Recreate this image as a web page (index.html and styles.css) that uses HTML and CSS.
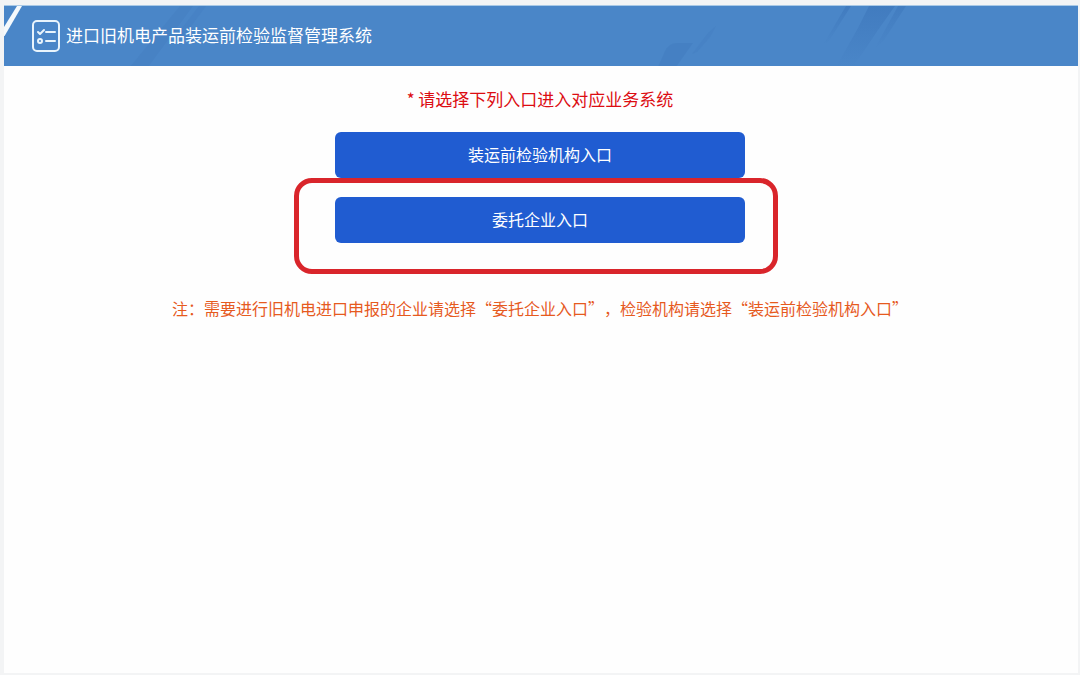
FILE: index.html
```html
<!DOCTYPE html>
<html lang="zh-CN">
<head>
<meta charset="utf-8">
<title>进口旧机电产品装运前检验监督管理系统</title>
<link rel="stylesheet" href="styles.css">
</head>
<body>
<div class="page">
  <header class="header">
    <svg class="corner" viewBox="0 0 18 30" aria-hidden="true">
      <path d="M0 21 13 0h5L0 31z" fill="#f5f9fc"/>
    </svg>
    <svg class="streaks streaks-left" viewBox="0 0 90 61" aria-hidden="true">
      <path d="M50 0h13L18 61H0z" fill="#437dc0" opacity=".5"/>
      <path d="M69 0h7L54 30h-8z" fill="#437dc0" opacity=".4"/>
    </svg>
    <svg class="streaks streaks-right" viewBox="0 0 260 61" aria-hidden="true">
      <defs>
        <linearGradient id="fade" x1="0" y1="0" x2="0" y2="1">
          <stop offset="0" stop-color="#3f79bd"/>
          <stop offset="1" stop-color="#3f79bd" stop-opacity="0"/>
        </linearGradient>
      </defs>
      <path d="M0 61 7 45q4-8 12-8h16L18 61z" fill="#437dc0" opacity=".6"/>
      <path d="M34 48 50 27 58 20 52 31 39 46z" fill="#437dc0" opacity=".4"/>
      <path d="M165 39 188 0h5L171 35z" fill="url(#fade)" opacity=".8"/>
      <path d="M178 61 200 22 211 0h26L220 24 208 42 195 61z" fill="url(#fade)" opacity=".8"/>
      <path d="M216 44 240 0h8L226 34z" fill="url(#fade)" opacity=".7"/>
    </svg>
    <svg class="logo" viewBox="0 0 28 32" fill="none" stroke="#e9f4fc" stroke-linecap="round" stroke-linejoin="round" aria-hidden="true">
      <rect x="1" y="1" width="26" height="30" rx="4" stroke-width="2"/>
      <path d="m6 12 2 2 4-4M14 12h9M14 21h9" stroke-width="2"/>
      <circle cx="8" cy="21" r="2" stroke-width="2"/>
    </svg>
    <h1 class="title">进口旧机电产品装运前检验监督管理系统</h1>
  </header>
  <main class="content">
    <p class="prompt">* 请选择下列入口进入对应业务系统</p>
    <div class="entries">
      <button class="entry" type="button">装运前检验机构入口</button>
      <button class="entry" type="button">委托企业入口</button>
      <div class="highlight"></div>
    </div>
    <p class="note">注：需要进行旧机电进口申报的企业请选择“委托企业入口”，检验机构请选择“装运前检验机构入口”</p>
  </main>
</div>
</body>
</html>
```
FILE: styles.css
```css
* {
  box-sizing: border-box;
}

body {
  margin: 0;
  background: #f3f4f5;
  font-family: "Noto Sans CJK SC", sans-serif;
  text-spacing-trim: space-all;
}

.page {
  display: flex;
  flex-direction: column;
  min-height: 100vh;
  padding: 5px 2px 1px 4px;
}

.header {
  position: relative;
  display: flex;
  align-items: center;
  gap: 6px;
  height: 61px;
  padding-left: 28px;
  border-top: 1px solid #a9c9e6;
  background: #4a86c8;
  overflow: hidden;
}

.corner {
  position: absolute;
  top: 0;
  left: 0;
  width: 18px;
  height: 30px;
}

.streaks {
  position: absolute;
  top: 0;
  height: 61px;
}

.streaks-left {
  left: 126px;
  width: 90px;
}

.streaks-right {
  right: 160px;
  width: 260px;
}

.logo {
  position: relative;
  width: 28px;
  height: 32px;
}

.title {
  position: relative;
  margin: 0;
  padding-bottom: 2px;
  color: #fff;
  font-size: 17px;
  font-weight: 400;
  line-height: 24px;
}

.content {
  flex: 1;
  display: flex;
  flex-direction: column;
  align-items: center;
  padding: 21px 2px 0 0;
  background: #fefefe;
  border-bottom: 1px solid #f3f4f5;
}

.prompt {
  margin: 0 0 21px;
  color: #dc0d12;
  font-size: 17px;
  line-height: 24px;
}

.entries {
  position: relative;
  display: flex;
  flex-direction: column;
  gap: 19px;
  width: 410px;
  max-width: 90%;
}

.entry {
  height: 46px;
  padding: 0 0 3px;
  border: 0;
  border-radius: 6px;
  background: #205cd1;
  color: #fff;
  font-family: inherit;
  font-size: 16px;
  line-height: 24px;
  cursor: pointer;
}

.highlight {
  position: absolute;
  top: 46px;
  right: -33px;
  left: -41px;
  height: 96px;
  border: 5px solid #d9252b;
  border-radius: 18px;
  pointer-events: none;
}

.note {
  margin: 53px 0 0;
  color: #e65a1e;
  font-size: 16px;
  line-height: 24px;
}
```
